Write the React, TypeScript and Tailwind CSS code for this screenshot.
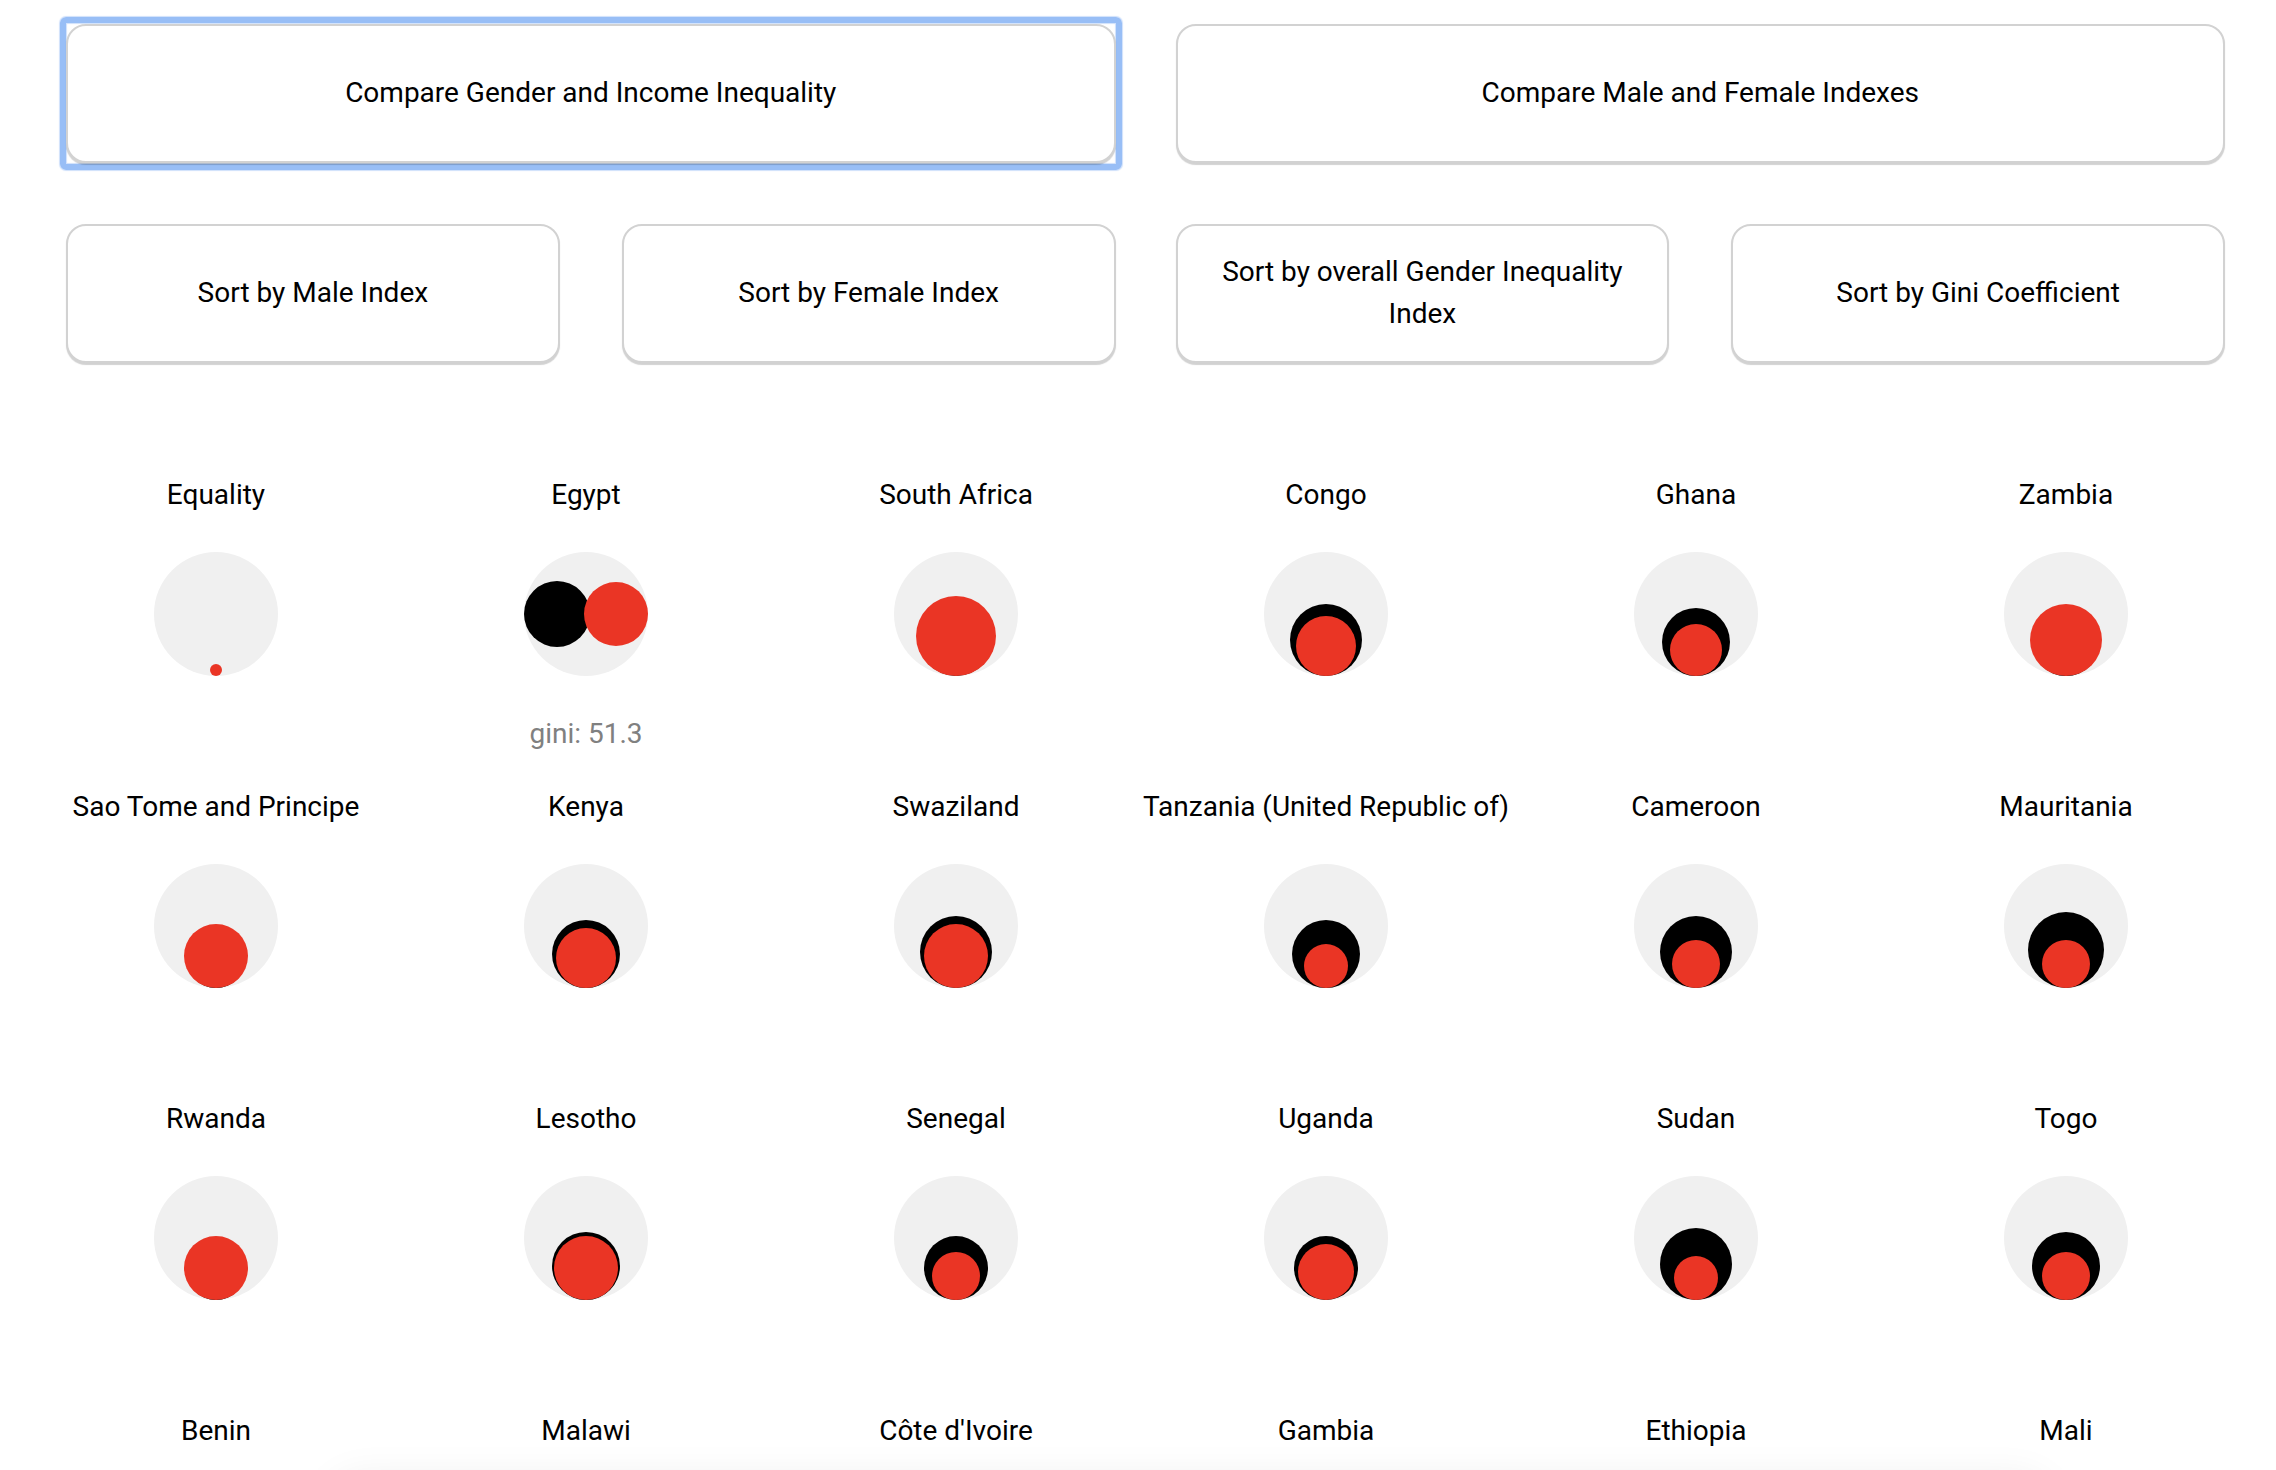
import React from "react";

type Country = {
  name: string;
  m: number;
  f: number;
  special?: boolean;
  gini?: string;
};

const countries: Country[] = [
  { name: "Equality", m: 0, f: 12 },
  { name: "Egypt", m: 66, f: 64, special: true, gini: "51.3" },
  { name: "South Africa", m: 76, f: 80 },
  { name: "Congo", m: 72, f: 60 },
  { name: "Ghana", m: 68, f: 52 },
  { name: "Zambia", m: 68, f: 72 },
  { name: "Sao Tome and Principe", m: 60, f: 64 },
  { name: "Kenya", m: 68, f: 60 },
  { name: "Swaziland", m: 72, f: 64 },
  { name: "Tanzania (United Republic of)", m: 68, f: 44 },
  { name: "Cameroon", m: 72, f: 48 },
  { name: "Mauritania", m: 76, f: 48 },
  { name: "Rwanda", m: 60, f: 64 },
  { name: "Lesotho", m: 68, f: 64 },
  { name: "Senegal", m: 64, f: 48 },
  { name: "Uganda", m: 64, f: 56 },
  { name: "Sudan", m: 72, f: 44 },
  { name: "Togo", m: 68, f: 48 },
  { name: "Benin", m: 68, f: 52 },
  { name: "Malawi", m: 64, f: 56 },
  { name: "Côte d'Ivoire", m: 72, f: 48 },
  { name: "Gambia", m: 68, f: 52 },
  { name: "Ethiopia", m: 72, f: 52 },
  { name: "Mali", m: 76, f: 44 },
];

const RED = "#ea3525";

function Glyph({ c }: { c: Country }) {
  const R = 62;
  const rb = c.m / 2;
  const rr = c.f / 2;
  if (c.special) {
    return (
      <svg width={124} height={124} viewBox="0 0 124 124">
        <circle cx={R} cy={R} r={R} fill="#f0f0f0" />
        <circle cx={rb} cy={R} r={rb} fill="#000" />
        <circle cx={124 - rr} cy={R} r={rr} fill={RED} />
      </svg>
    );
  }
  return (
    <svg width={124} height={124} viewBox="0 0 124 124">
      <circle cx={R} cy={R} r={R} fill="#f0f0f0" />
      {rb > 0 && <circle cx={R} cy={124 - rb} r={rb} fill="#000" />}
      <circle cx={R} cy={124 - rr} r={rr} fill={RED} />
    </svg>
  );
}

function Btn({ children, focused }: { children: React.ReactNode; focused?: boolean }) {
  return (
    <div className="relative flex-1">
      {focused && (
        <span className="pointer-events-none absolute inset-x-[-6px] inset-y-[-7px] rounded-[6px] border-[6px] border-[#98bef6] shadow-[0_0_1px_1px_#cfe0fb,inset_0_0_1px_1px_#cfe0fb]" />
      )}
      <button className="relative flex h-[139px] w-full items-center justify-center rounded-[20px] border-2 border-[#d2d2d2] bg-white px-[32px] pb-[1px] text-center text-[28px] leading-[42px] text-black shadow-[0_2px_1px_rgba(0,0,0,0.18)]">
        {children}
      </button>
    </div>
  );
}

export default function App() {
  return (
    <div
      className="relative min-h-[1470px] w-full overflow-hidden bg-white"
      style={{ fontFamily: "Roboto, 'Liberation Sans', sans-serif" }}
    >
      <div className="pl-[66px] pr-[51px] pt-[24px]">
        <div className="flex gap-[60px]">
          <Btn focused>Compare Gender and Income Inequality</Btn>
          <Btn>Compare Male and Female Indexes</Btn>
        </div>
        <div className="mt-[61px] flex gap-[60px]">
          <div className="flex flex-1 gap-[62px]">
            <Btn>Sort by Male Index</Btn>
            <Btn>Sort by Female Index</Btn>
          </div>
          <div className="flex flex-1 gap-[62px]">
            <Btn>Sort by overall Gender Inequality Index</Btn>
            <Btn>Sort by Gini Coefficient</Btn>
          </div>
        </div>
      </div>

      <div className="mt-[115px] pl-[31px]">
        <div className="grid grid-cols-[repeat(6,370px)]">
          {countries.map((c) => (
            <div key={c.name} className="flex h-[312px] flex-col items-center">
              <div className="whitespace-nowrap text-[28px] leading-[33px] text-black">{c.name}</div>
              <div className="mt-[41px] h-[124px] w-[124px]">
                <Glyph c={c} />
              </div>
              <div className="mt-[41px] h-[33px] text-[28px] leading-[33px] text-[#808080]">
                {c.gini ? `gini: ${c.gini}` : ""}
              </div>
            </div>
          ))}
        </div>
      </div>

      <div className="pointer-events-none absolute left-[330px] top-[1478px] h-[120px] w-[1720px] rounded-[30px] bg-white shadow-[0_0_40px_rgba(0,0,0,0.07)]" />
    </div>
  );
}
